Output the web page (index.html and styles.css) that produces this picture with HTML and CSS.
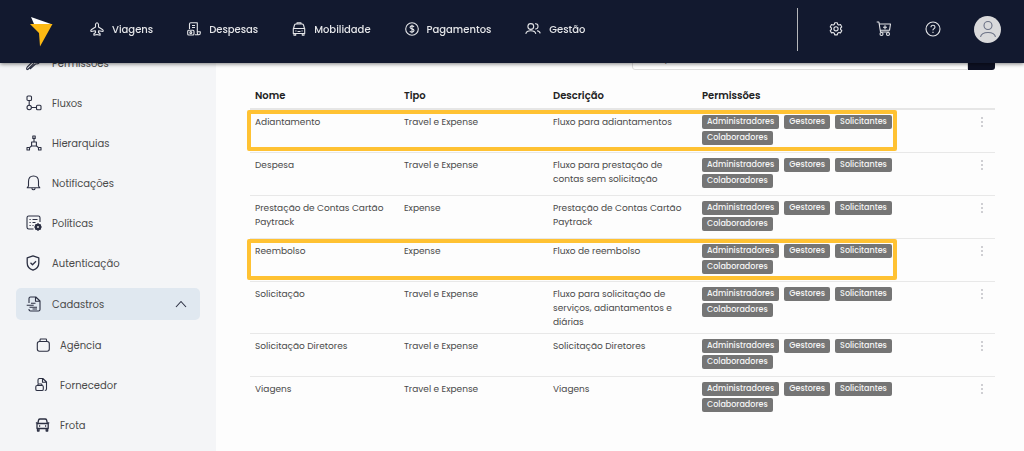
FILE: index.html
```html
<!DOCTYPE html>
<html lang="pt-BR">
<head>
    <meta charset="UTF-8">
    <meta name="viewport" content="width=device-width, initial-scale=1.0">
    <title>Cadastros - Fluxos</title>
    <link rel="stylesheet" href="styles.css">
</head>
<body>
    <header class="topbar">
        <a href="#" class="logo" aria-label="Início">
            <svg width="24" height="30" viewBox="0 0 24 30"><path d="M1 0l20 7H4z" fill="#fff"/><path d="M0 7h22.500L10 29.500 9 16z" fill="#fdb913"/></svg>
        </a>
        <nav class="menu">
            <a href="#">
                <svg class="icon" width="14" height="14" viewBox="0 0 14 14"><path d="M5.500 5V2.200Q7-.8 8.500 2.200V5l4.300 2.800q.8.900 0 1.700L8.700 8.700l-.3 1.800 1.700 1.200v1.500L7 12.500l-3.100.7v-1.500l1.700-1.200-.3-1.800-4.100.8q-.8-.8 0-1.700z"/></svg>
                Viagens
            </a>
            <a href="#">
                <svg class="icon" width="14" height="14" viewBox="0 0 14 14"><path d="M2.500 7V2q0-1.300 1.300-1.300h6.500V11q0 1.800 1.500 1.800T13.300 11V9.800h-3M5 3.500h3M5 5.500h3M8 12.800h3.500"/><rect x=".7" y="8.300" width="6.300" height="4.700" rx="1"/><circle cx="3.800" cy="10.600" r="1"/></svg>
                Despesas
            </a>
            <a href="#">
                <svg class="icon" width="14" height="14" viewBox="0 0 14 14"><path d="M1.500 6.500l1-3.500q.3-1 1.500-1h6q1.200 0 1.500 1l1 3.500M5 2V.7h4V2M1.300 6.500h11.400v5H1.300zM2 11.500v1.800h1.700v-1.800M10.300 11.500v1.800H12v-1.800M3.300 9h1.200M9.500 9h1.200M5.500 9.500h3"/></svg>
                Mobilidade
            </a>
            <a href="#">
                <svg class="icon" width="14" height="14" viewBox="0 0 14 14"><circle cx="7" cy="7" r="6.300"/><path d="M9 5Q8.700 3.900 7 3.900T5 5.300q0 1.200 2 1.600t2 1.700q0 1.500-2 1.500T5 8.900M7 2.700v8.600"/></svg>
                Pagamentos
            </a>
            <a href="#">
                <svg class="icon" width="16" height="14" viewBox="0 0 16 14"><circle cx="5.800" cy="4.500" r="2.900"/><path d="M.8 11.800q.5-3 5-3t5 3M10 1.800q3-.4 3 2.500t-2.800 2.600M12 8.700q2.800.3 3.200 2.600"/></svg>
                Gestão
            </a>
        </nav>
        <div class="tools">
            <button type="button" aria-label="Configurações">
                <svg class="icon" width="14" height="14" viewBox="0 0 14 14"><path d="M5.700.8h2.600l.4 1.600 1.200.7 1.600-.5 1.300 2.300-1.200 1.100v1.500l1.200 1.200-1.300 2.200-1.600-.4-1.200.7-.4 1.700H5.700l-.4-1.700-1.200-.7-1.600.4-1.300-2.200 1.200-1.200V6L1.200 4.900l1.300-2.300 1.600.5 1.200-.7z"/><circle cx="7" cy="6.800" r="2.100"/></svg>
            </button>
            <button type="button" aria-label="Carrinho">
                <svg class="icon" width="16" height="16" viewBox="0 0 16 16"><path d="M.7 1h2.200L4.500 11h8.700M3.200 3h11.300l-1 6.300H4.200M9 4.200v4M7 6.200h4"/><circle cx="5.500" cy="13" r="1.500"/><circle cx="12" cy="13" r="1.500"/></svg>
            </button>
            <button type="button" aria-label="Ajuda">
                <svg class="icon" width="16" height="16" viewBox="0 0 16 16"><circle cx="8" cy="8" r="7"/><path d="M6 6.300Q6 4.300 8 4.300t2 1.800Q10 7.200 8.900 7.700T8 9.400M8 10.800v1.300"/></svg>
            </button>
            <button type="button" class="avatar" aria-label="Perfil">
                <svg class="icon" width="18" height="18" viewBox="0 0 18 18"><circle cx="9" cy="5.500" r="4"/><path d="M1.500 16.800q1-4.300 7.500-4.300t7.500 4.300"/></svg>
            </button>
        </div>
    </header>

    <div class="layout">
        <aside class="sidebar">
            <a href="#">
                <svg class="icon" width="16" height="16" viewBox="0 0 16 16"><path d="M8 8.300L2.300 14q-1 1-1.500.3T1.300 12L7 6.300q-.7-3 1.500-4.500T13 1.500L10.500 4l1.300 1.300L14.500 3q1 2.500-.8 4.300T9.500 9L4 14"/></svg>
                Permissões
            </a>
            <a href="#">
                <svg class="icon" width="16" height="16" viewBox="0 0 16 16"><rect x="1" y="1" width="4.500" height="4.500" rx="1"/><circle cx="3.200" cy="12.500" r="2.200"/><rect x="10.500" y="10.300" width="4.500" height="4.500" rx="1"/><path d="M3.200 5.500v4.800M5.500 12.500h5"/></svg>
                Fluxos
            </a>
            <a href="#">
                <svg class="icon" width="16" height="16" viewBox="0 0 16 16"><rect x="6.800" y="1" width="2.400" height="2.400"/><rect x="5.600" y="7" width="4.800" height="4"/><rect x="1" y="12.500" width="2.500" height="2.500"/><rect x="12.500" y="12.500" width="2.500" height="2.500"/><path d="M8 3.500V7M5.500 11l-2 1.700M10.500 11l2 1.700"/></svg>
                Hierarquias
            </a>
            <a href="#">
                <svg class="icon" width="16" height="16" viewBox="0 0 16 16"><path d="M2.500 11V6.500q0-5.500 5-5.500t5 5.500V11l1.300 1.800H1.200zM5.800 13.300q.4 1.500 1.700 1.500t1.700-1.500"/></svg>
                Notificações
            </a>
            <a href="#">
                <svg class="icon" width="16" height="16" viewBox="0 0 16 16"><path d="M7.500 14H2.700Q1 14 1 12.300V2.700Q1 1 2.700 1h9.600Q14 1 14 2.700V7M3.500 4.500h1.200M6.500 4.500h5M3.500 7.500h1.200M6.500 7.500h3M3.500 10.500h1.200M6.500 10.500h1"/><circle cx="12" cy="12" r="2.100" stroke-width="2.400"/><path d="M12 8.300v1M12 14.700v1M8.500 12h1M14.500 12h1M9.500 9.500l1 1M13.500 13.500l1 1M14.500 9.500l-1 1M10.500 13.500l-1 1" stroke-width="1.500"/></svg>
                Políticas
            </a>
            <a href="#">
                <svg class="icon" width="16" height="16" viewBox="0 0 16 16"><path d="M7 .9l5.800 2v5Q12.800 13 7 15.200 1.200 13 1.200 7.900v-5zM4.500 7.800l2 1.900 3.500-3.400" stroke-width="1.300"/></svg>
                Autenticação
            </a>
            <a href="#" class="active">
                <svg class="icon" width="16" height="16" viewBox="0 0 16 16"><path d="M3 7V2.500Q3 1 4.500 1h5.300L14 5v8.500q0 1.500-1.500 1.500h-8Q3 15 3 13.500V13M9.500 1v4.300H14M.7 9.300h7M3.500 11.200H11M5 7.300h4.500M6.500 13H11"/></svg>
                Cadastros
                <svg class="icon chevron" width="12" height="8" viewBox="0 0 12 8"><path d="M1 7l5-5.500L11 7"/></svg>
            </a>
            <div class="submenu">
                <a href="#">
                    <svg class="icon" width="16" height="16" viewBox="0 0 16 16"><rect x="2.300" y="4.500" width="12" height="9.800" rx="2.200"/><path d="M4.800 4.500l.5-2.500h6l.5 2.500"/></svg>
                    Agência
                </a>
                <a href="#">
                    <svg class="icon" width="16" height="16" viewBox="0 0 16 16"><path d="M3 6.500V3q0-1.500 1.500-1.500h3.300L11.500 5v7q0 1.500-1.700 1.500M7.500 1.500V5.200h4M2.500 8.500l.8-1.500h3.200l.8 1.500"/><rect x=".8" y="8.500" width="7.500" height="5" rx="1.300"/></svg>
                    Fornecedor
                </a>
                <a href="#">
                    <svg class="icon" width="16" height="16" viewBox="0 0 16 16"><path d="M2.800 6.500l.8-3.500q.3-1 1.500-1h5q1.200 0 1.500 1l.8 3.500M1 5.500l1.300 1M14.200 5.500l-1.300 1M2 6.500h11.200v5H2zM2.500 11.500V14h1.500v-2.500M11.200 11.500V14h1.500v-2.500M4 9h1.200M10 9h1.200" stroke-width="1.300"/></svg>
                    Frota
                </a>
            </div>
        </aside>

        <main class="content">
            <form class="search">
                <input type="text" placeholder="Pesquisar" aria-label="Pesquisar">
                <button type="button" aria-label="Buscar"></button>
            </form>
            <table>
                <thead>
                    <tr>
                        <th>Nome</th>
                        <th>Tipo</th>
                        <th>Descrição</th>
                        <th class="permissions">Permissões</th>
                        <th class="actions"></th>
                    </tr>
                </thead>
                <tbody>
                    <tr class="marked">
                        <td>Adiantamento</td>
                        <td>Travel e Expense</td>
                        <td>Fluxo para adiantamentos</td>
                        <td><div class="badges"><span>Administradores</span><span>Gestores</span><span>Solicitantes</span><span>Colaboradores</span></div></td>
                        <td class="actions"><button type="button" aria-label="Opções"><i></i><i></i><i></i></button></td>
                    </tr>
                    <tr>
                        <td>Despesa</td>
                        <td>Travel e Expense</td>
                        <td>Fluxo para prestação de contas sem solicitação</td>
                        <td><div class="badges"><span>Administradores</span><span>Gestores</span><span>Solicitantes</span><span>Colaboradores</span></div></td>
                        <td class="actions"><button type="button" aria-label="Opções"><i></i><i></i><i></i></button></td>
                    </tr>
                    <tr>
                        <td>Prestação de Contas Cartão Paytrack</td>
                        <td>Expense</td>
                        <td>Prestação de Contas Cartão Paytrack</td>
                        <td><div class="badges"><span>Administradores</span><span>Gestores</span><span>Solicitantes</span><span>Colaboradores</span></div></td>
                        <td class="actions"><button type="button" aria-label="Opções"><i></i><i></i><i></i></button></td>
                    </tr>
                    <tr class="marked">
                        <td>Reembolso</td>
                        <td>Expense</td>
                        <td>Fluxo de reembolso</td>
                        <td><div class="badges"><span>Administradores</span><span>Gestores</span><span>Solicitantes</span><span>Colaboradores</span></div></td>
                        <td class="actions"><button type="button" aria-label="Opções"><i></i><i></i><i></i></button></td>
                    </tr>
                    <tr>
                        <td>Solicitação</td>
                        <td>Travel e Expense</td>
                        <td>Fluxo para solicitação de serviços, adiantamentos e diárias</td>
                        <td><div class="badges"><span>Administradores</span><span>Gestores</span><span>Solicitantes</span><span>Colaboradores</span></div></td>
                        <td class="actions"><button type="button" aria-label="Opções"><i></i><i></i><i></i></button></td>
                    </tr>
                    <tr>
                        <td>Solicitação Diretores</td>
                        <td>Travel e Expense</td>
                        <td>Solicitação Diretores</td>
                        <td><div class="badges"><span>Administradores</span><span>Gestores</span><span>Solicitantes</span><span>Colaboradores</span></div></td>
                        <td class="actions"><button type="button" aria-label="Opções"><i></i><i></i><i></i></button></td>
                    </tr>
                    <tr>
                        <td>Viagens</td>
                        <td>Travel e Expense</td>
                        <td>Viagens</td>
                        <td><div class="badges"><span>Administradores</span><span>Gestores</span><span>Solicitantes</span><span>Colaboradores</span></div></td>
                        <td class="actions"><button type="button" aria-label="Opções"><i></i><i></i><i></i></button></td>
                    </tr>
                </tbody>
            </table>
        </main>
    </div>
</body>
</html>
```
FILE: styles.css
```css
* {
    box-sizing: border-box;
}
body {
    margin: 0;
    font-family: "Poppins", "Inter", sans-serif;
    font-size: 10px;
    line-height: 14px;
    color: #4a4a4a;
    background: #fdfdfd;
}
a {
    color: inherit;
    text-decoration: none;
}
button {
    padding: 0;
    border: 0;
    background: none;
    color: inherit;
    cursor: pointer;
}
.icon {
    flex: none;
    display: block;
    fill: none;
    stroke: currentColor;
    stroke-width: 1.1;
    stroke-linejoin: round;
}

/* top bar */
.topbar {
    position: fixed;
    top: 0;
    left: 0;
    right: 0;
    z-index: 10;
    display: flex;
    align-items: center;
    height: 63px;
    padding: 0 23px 5px 30px;
    background: #12192f;
    color: #e4e5e8;
    box-shadow: 0 1px 4px rgba(0,0,0,0.5);
}
.logo {
    width: 60px;
    padding-top: 5px;
}
.logo svg {
    display: block;
}
.menu {
    display: flex;
    gap: 34px;
    font-weight: 500;
    line-height: 15px;
}
.menu a {
    display: flex;
    align-items: center;
    gap: 8px;
}
.tools {
    display: flex;
    align-items: center;
    gap: 33px;
    height: 43px;
    margin-left: auto;
    padding-left: 31px;
    border-left: 1px solid #b5b6ba;
}
.avatar {
    display: grid;
    place-items: center;
    width: 27px;
    height: 27px;
    border-radius: 50%;
    background: #d9d9db;
    color: #6c7286;
}

/* side menu */
.layout {
    display: flex;
    min-height: 100vh;
}
.sidebar {
    flex: none;
    width: 216px;
    padding-top: 43px;
    background: #f4f5f7;
    line-height: 15px;
}
.sidebar a {
    display: flex;
    align-items: center;
    gap: 10px;
    height: 40px;
    margin: 0 16px;
    padding: 0 13px 0 10px;
}
.sidebar .icon {
    color: #2b2f42;
}
.sidebar .active {
    height: 32px;
    margin: 5px 16px;
    border-radius: 5px;
    background: #e0e8f0;
}
.sidebar .chevron {
    margin-left: auto;
}
.submenu a {
    gap: 9px;
    padding-left: 19px;
}

/* table */
.content {
    flex: 1;
    padding: 46px 29px 20px 34px;
}
.search {
    display: flex;
    height: 24px;
    margin: 0 0 14px auto;
    width: 363px;
}
.search input {
    flex: 1;
    padding: 0 10px;
    border: 1px solid #dedede;
    border-radius: 3px 0 0 3px;
    background: #fff;
    font: inherit;
}
.search button {
    width: 27px;
    border-radius: 0 3px 3px 0;
    background: #0d1124;
}
table {
    width: 100%;
    table-layout: fixed;
    border-spacing: 0;
}
th {
    width: 20%;
    padding: 5px;
    border-bottom: 2px solid #e6e6e6;
    text-align: left;
    color: #222;
    font-weight: 600;
}
td {
    height: 43px;
    padding: 5px 5px 4px;
    border-bottom: 1px solid #e8e8e8;
    vertical-align: top;
    font-size: 9px;
}
tbody tr:last-child td {
    border-bottom: 0;
}
th.permissions {
    width: auto;
}
th.actions {
    width: 26px;
}
.actions {
    padding-left: 0;
    padding-right: 0;
}
.actions button {
    display: grid;
    gap: 2px;
    margin: 2px auto 0;
}
.actions i {
    width: 2px;
    height: 2px;
    background: #cfcfd3;
}
.badges {
    display: flex;
    flex-wrap: wrap;
    gap: 2px 5px;
    max-width: 200px;
}
.badges span {
    padding: 0 5px;
    border-radius: 2px;
    background: #757575;
    color: #f5f5f5;
    font-size: 8px;
    font-weight: 500;
}
.marked {
    position: relative;
}
/* frame round a marked row, short of the actions column */
.marked td:first-child::after {
    content: "";
    position: absolute;
    top: 0;
    bottom: 2px;
    left: -3px;
    right: 98px;
    border: 4px solid #ffc233;
    border-radius: 2px;
}
```
